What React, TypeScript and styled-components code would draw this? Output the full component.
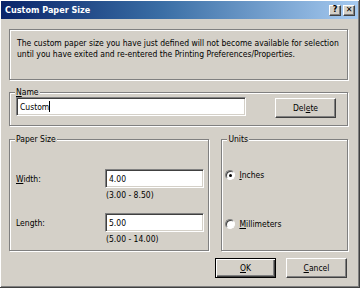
import styled, { createGlobalStyle } from "styled-components";

const GlobalStyle = createGlobalStyle`
  html, body {
    margin: 0;
    padding: 0;
    background: #d4d0c8;
  }
  * {
    box-sizing: border-box;
  }
`;

const face = `"DejaVu Sans Condensed", "DejaVu Sans", sans-serif`;

const Window = styled.div`
  width: 360px;
  height: 288px;
  background: #d4d0c8;
  border-right: 1px solid #404040;
  border-bottom: 1px solid #404040;
  box-shadow: inset 1px 1px 0 #ffffff, inset -1px -1px 0 #808080;
  padding: 1px;
  font-family: ${face};
  font-size: 8.5px;
  color: #000;
  display: flex;
  flex-direction: column;
`;

const TitleBar = styled.div`
  height: 18px;
  display: flex;
  align-items: center;
  justify-content: space-between;
  padding: 0 3px 0 4px;
  background: linear-gradient(90deg, #0a246a 0%, #3a6ea5 45%, #a6caf0 100%);
`;

const Title = styled.span`
  color: #fff;
  font-weight: bold;
  font-size: 9px;
`;

const CapButtons = styled.div`
  display: flex;
  gap: 2px;
`;

const CapButton = styled.div`
  width: 12px;
  height: 11px;
  background: #d4d0c8;
  border: 1px solid;
  border-color: #fff #404040 #404040 #fff;
  box-shadow: inset -1px -1px 0 #808080;
  display: flex;
  align-items: center;
  justify-content: center;
  font-weight: bold;
  font-size: 8px;
  line-height: 1;
  font-family: "DejaVu Sans", sans-serif;
`;

const Body = styled.div`
  flex: 1;
  display: flex;
  flex-direction: column;
  padding: 10px 10px 0 8px;
`;

const InfoBox = styled.div`
  height: 51px;
  border: 1px solid #808080;
  box-shadow: inset 1px 1px 0 #fff, 1px 1px 0 #fff;
  padding: 8px 7px 0 7px;
  line-height: 11px;
`;

const Group = styled.div<{ $height: number; $width?: number }>`
  position: relative;
  height: ${({ $height }) => $height}px;
  width: ${({ $width }) => ($width ? `${$width}px` : "auto")};
  border: 1px solid #808080;
  box-shadow: inset 1px 1px 0 #fff, 1px 1px 0 #fff;
`;

const Legend = styled.span`
  position: absolute;
  top: -6px;
  left: 5px;
  padding: 0 1px;
  background: #d4d0c8;
  line-height: 10px;
`;

const NameGroup = styled(Group)`
  margin-top: 12px;
  display: flex;
  align-items: flex-start;
  padding: 4px 0 0 6px;
`;

const TextField = styled.div<{ $width: number }>`
  width: ${({ $width }) => $width}px;
  height: 19px;
  background: #fff;
  border: 1px solid;
  border-color: #808080 #fff #fff #808080;
  box-shadow: inset 1px 1px 0 #404040, inset -1px -1px 0 #d4d0c8;
  padding: 0 3px;
  display: flex;
  align-items: center;
`;

const Caret = styled.span`
  display: inline-block;
  width: 1px;
  height: 11px;
  background: #000;
`;

const Button = styled.div<{ $default?: boolean }>`
  width: 61px;
  height: 20px;
  display: flex;
  align-items: center;
  justify-content: center;
  background: #d4d0c8;
  border: 1px solid;
  border-color: ${({ $default }) =>
    $default ? "#000" : "#fff #404040 #404040 #fff"};
  box-shadow: ${({ $default }) =>
    $default
      ? "inset 1px 1px 0 #fff, inset -1px -1px 0 #404040, inset -2px -2px 0 #808080"
      : "inset -1px -1px 0 #808080"};
`;

const DeleteButton = styled(Button)`
  margin-left: 29px;
  margin-top: 1px;
`;

const Columns = styled.div`
  margin-top: 13px;
  display: flex;
  gap: 12px;
`;

const SizeGrid = styled.div`
  display: grid;
  grid-template-columns: 89px 99px;
  grid-template-rows: 19px 13px 12px 19px 13px;
  padding: 29px 0 0 6px;
  align-items: center;
`;

const Spacer = styled.div`
  grid-column: 1 / -1;
`;

const Hint = styled.span`
  grid-column: 2;
  padding-left: 1px;
`;

const UnitList = styled.div`
  display: flex;
  flex-direction: column;
  gap: 39px;
  padding: 30px 0 0 3px;
`;

const Radio = styled.label`
  display: flex;
  align-items: center;
  gap: 4px;
`;

const RadioDot = styled.span<{ $checked?: boolean }>`
  width: 10px;
  height: 10px;
  border-radius: 50%;
  background: #fff;
  border: 1px solid;
  border-color: #808080 #fff #fff #808080;
  box-shadow: inset 1px 1px 0 #404040;
  display: flex;
  align-items: center;
  justify-content: center;
  &::after {
    content: "";
    width: 3px;
    height: 3px;
    border-radius: 50%;
    background: ${({ $checked }) => ($checked ? "#000" : "transparent")};
  }
`;

const Footer = styled.div`
  margin-top: 7px;
  display: flex;
  justify-content: flex-end;
  gap: 10px;
  padding-right: 1px;
`;

const U = styled.span`
  text-decoration: underline;
`;

export default function App() {
  return (
    <>
      <GlobalStyle />
      <Window>
        <TitleBar>
          <Title>Custom Paper Size</Title>
          <CapButtons>
            <CapButton>?</CapButton>
            <CapButton>✕</CapButton>
          </CapButtons>
        </TitleBar>
        <Body>
          <InfoBox>
            The custom paper size you have just defined will not become available for selection
            <br />
            until you have exited and re-entered the Printing Preferences/Properties.
          </InfoBox>

          <NameGroup $height={34}>
            <Legend>
              <U>N</U>ame
            </Legend>
            <TextField $width={230}>
              Custom
              <Caret />
            </TextField>
            <DeleteButton>
              Del<U>e</U>te
            </DeleteButton>
          </NameGroup>

          <Columns>
            <Group $height={112} $width={201}>
              <Legend>Paper Size</Legend>
              <SizeGrid>
                <span>
                  <U>W</U>idth:
                </span>
                <TextField $width={99}>4.00</TextField>
                <Hint>(3.00 - 8.50)</Hint>
                <Spacer />
                <span>Length:</span>
                <TextField $width={99}>5.00</TextField>
                <Hint>(5.00 - 14.00)</Hint>
              </SizeGrid>
            </Group>
            <Group $height={112} $width={127}>
              <Legend>Units</Legend>
              <UnitList>
                <Radio>
                  <RadioDot $checked />
                  <span>
                    <U>I</U>nches
                  </span>
                </Radio>
                <Radio>
                  <RadioDot />
                  <span>
                    <U>M</U>illimeters
                  </span>
                </Radio>
              </UnitList>
            </Group>
          </Columns>

          <Footer>
            <Button $default>
              <U>O</U>K
            </Button>
            <Button>
              <U>C</U>ancel
            </Button>
          </Footer>
        </Body>
      </Window>
    </>
  );
}
